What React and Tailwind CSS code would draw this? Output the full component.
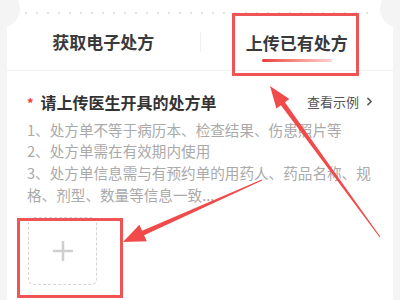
import { ChevronRight } from "lucide-react";

const tips = [
  "1、处方单不等于病历本、检查结果、伤患照片等",
  "2、处方单需在有效期内使用",
  "3、处方单信息需与有预约单的用药人、药品名称、规",
  "格、剂型、数量等信息一致...",
];

function Arrows() {
  return (
    <svg className="pointer-events-none absolute inset-0" width="400" height="300" viewBox="0 0 400 300">
      {/* arrow to the tab */}
      <polygon
        fill="#f04a4a"
        points="270,86 289.4,99.1 284.9,102.3 380.4,236.7 379.6,237.3 280.9,105.3 276.4,108.5"
      />
      {/* arrow to the upload box */}
      <polygon
        fill="#f04a4a"
        points="123,242 139.4,224.8 142.1,230.7 261.8,179.5 262.2,180.5 144.1,235.3 146.8,241.2"
      />
    </svg>
  );
}

export default function App() {
  return (
    <div
      className="relative h-[300px] w-[400px] overflow-hidden bg-[#f4f4f4] px-[7px]"
      style={{ fontFamily: '"Noto Sans CJK SC", "Noto Sans", sans-serif' }}
    >
      <div className="h-full bg-white">
        <div className="flex h-[26px] items-center px-[18px]">
          <svg width="350" height="2" className="block">
            <line x1="0" y1="1" x2="350" y2="1" stroke="#e2e2e2" strokeWidth="2" strokeDasharray="2 9" />
          </svg>
        </div>

        <div className="flex h-[45px] border-b border-[#efefef]">
          <div className="flex flex-1 items-center justify-center pb-[12px] text-[17px] font-semibold text-[#3a3a3a]">
            获取电子处方
          </div>
          <div className="mt-[6px] h-[20px] w-px bg-[#f0f0f0]" />
          <div className="flex flex-1 flex-col items-center pt-[5px]">
            <span className="text-[17px] font-semibold leading-[24px] text-[#3a3a3a]">上传已有处方</span>
            <span className="mt-[4px] h-[3px] w-[70px] rounded-full bg-gradient-to-r from-[#e83a3a] to-[#fbd3d3]" />
          </div>
        </div>

        <div className="pl-5 pr-[17px] pt-[20px]">
          <div className="flex items-center justify-between">
            <div className="flex items-center">
              <span className="mr-[7px] mt-[2px] text-[13px] font-bold text-[#ee3b3b]">*</span>
              <span className="text-[16px] font-bold leading-[20px] text-[#333]">请上传医生开具的处方单</span>
            </div>
            <div className="flex items-center text-[13px] text-[#555]">
              查看示例
              <ChevronRight size={13} strokeWidth={3} className="ml-[4px]" />
            </div>
          </div>

          <div className="mt-[6px] text-[14.6px] leading-[21.7px] text-[#aaaaaa]">
            {tips.map((t) => (
              <div key={t} className="whitespace-nowrap">
                {t}
              </div>
            ))}
          </div>

          <div className="ml-[1px] mt-[12px] flex h-[68px] w-[69px] items-center justify-center rounded-md border border-dashed border-[#d4d4d4]">
            <svg width="20" height="20" viewBox="0 0 20 20">
              <path d="M10 0v20M0 10h20" stroke="#cfcfcf" strokeWidth="2.5" />
            </svg>
          </div>
        </div>
      </div>

      {/* ticket notches */}
      <div className="absolute left-[-18px] top-[-10px] h-[38px] w-[38px] rounded-full bg-[#f4f4f4]" />
      <div className="absolute right-[-18px] top-[-10px] h-[38px] w-[38px] rounded-full bg-[#f4f4f4]" />

      {/* annotation boxes */}
      <div className="absolute left-[232px] top-[13px] h-[63px] w-[127px] border-[3px] border-[#f05454]" />
      <div className="absolute left-[17px] top-[218px] h-[80px] w-[106px] border-[3px] border-[#f05454]" />

      <Arrows />
    </div>
  );
}
